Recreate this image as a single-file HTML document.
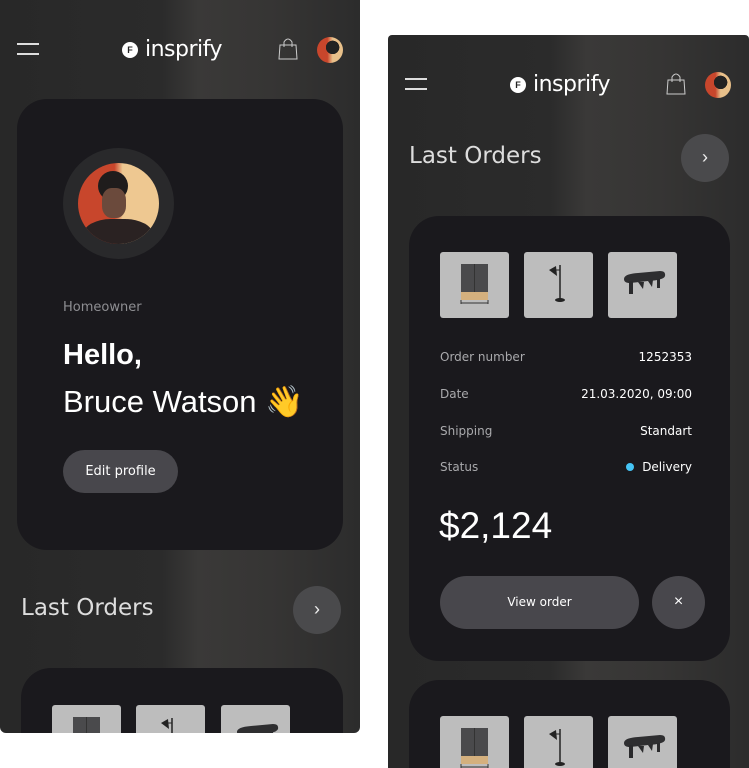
<!DOCTYPE html>
<html><head><meta charset="utf-8"><style>
*{margin:0;padding:0;box-sizing:border-box}
body{width:749px;height:768px;background:#fff;position:relative;overflow:hidden;font-family:"Liberation Sans",sans-serif;color:#fff}
.a{position:absolute}
.frame{position:absolute;overflow:hidden;background:linear-gradient(90deg,#282828 0%,#2b2b2b 45%,#3a3938 55%,#363534 75%,#2c2c2c 100%)}
.card{position:absolute;background:#1a191d;border-radius:30px}
.thumb{position:absolute;width:69px;height:66px;background:#bdbdbd;border-radius:3px}
.lbl{position:absolute;font-size:12px;color:#a9a9ac;font-family:"DejaVu Sans",sans-serif}
.val{position:absolute;font-size:12px;color:#fff;text-align:right;font-family:"DejaVu Sans",sans-serif}
.ham{position:absolute;width:22px;height:1.5px;background:#ddd}
</style></head><body>

<svg width="0" height="0" style="position:absolute"><defs>
<g id="cab"><rect x="21" y="12" width="27" height="28" fill="#4a4a4c"/><line x1="34.5" y1="12" x2="34.5" y2="40" stroke="#333"/><rect x="21" y="40" width="27" height="8" fill="#d4b07e"/><line x1="21" y1="48" x2="21" y2="52" stroke="#333"/><line x1="48" y1="48" x2="48" y2="52" stroke="#333"/><line x1="21" y1="51" x2="48" y2="51" stroke="#333"/></g>
<g id="lamp"><path d="M25 18 L32 14 L33 24 Z" fill="#222"/><line x1="36" y1="13" x2="36" y2="47" stroke="#222" stroke-width="1.5"/><line x1="31" y1="18" x2="36" y2="18" stroke="#222"/><ellipse cx="36" cy="48" rx="5" ry="2" fill="#222"/></g>
<g id="bench"><path d="M16 27 Q16 22 30 21 L52 19 Q58 19 57 24 Q56 28 40 29 L22 31 Q16 31 16 27Z" fill="#2e2e30"/><rect x="21" y="29" width="4" height="13" fill="#2a2a2c"/><rect x="49" y="27" width="3" height="9" fill="#2a2a2c"/><path d="M30 30 L35 37 L36 30Z M40 29 L44 35 L45 28Z" fill="#2a2a2c"/></g>
</defs></svg>

<!-- LEFT FRAME -->
<div class="frame" style="left:0;top:0;width:360px;height:733px;border-radius:0 0 6px 6px">
  <div class="ham" style="left:17px;top:43px"></div><div class="ham" style="left:17px;top:53px"></div>
  <div class="a" style="left:122px;top:42px;width:16px;height:16px;border-radius:50%;background:#fff;color:#222;font-size:9px;font-weight:bold;text-align:center;line-height:16px">F</div>
  <div class="a" style="left:145px;top:37px;font-size:22px;font-family:'DejaVu Sans',sans-serif;letter-spacing:-0.5px">insprify</div>
  <svg class="a" style="left:278px;top:37px" width="20" height="23" viewBox="0 0 20 23"><path d="M2 8 H18 L19 22 H1 Z" fill="none" stroke="#ccc" stroke-width="1"/><path d="M6 10 V5 Q10 -1 14 5 V10" fill="none" stroke="#ccc"/></svg>
  <div class="a" style="left:317px;top:37px;width:26px;height:26px;border-radius:50%;background:radial-gradient(circle at 60% 40%,#222 30%,transparent 31%),linear-gradient(90deg,#c8462c 40%,#e8c08a 60%)"></div>
  <div class="card" style="left:17px;top:99px;width:326px;height:451px">
    <div class="a" style="left:46px;top:49px;width:111px;height:111px;border-radius:50%;background:#29292b"></div>
    <div class="a" style="left:61px;top:64px;width:81px;height:81px;border-radius:50%;overflow:hidden;background:linear-gradient(90deg,#c8462c 0 45%,#eec891 55%)">
      <div class="a" style="left:20px;top:8px;width:30px;height:30px;border-radius:50%;background:#1f1c1c"></div>
      <div class="a" style="left:24px;top:25px;width:24px;height:30px;border-radius:40%;background:#6b4a3c"></div>
      <div class="a" style="left:5px;top:56px;width:70px;height:40px;border-radius:40% 40% 0 0;background:#2a2222"></div>
    </div>
    <div class="a" style="left:46px;top:201px;font-size:13px;color:#8e8e92;font-family:'DejaVu Sans',sans-serif">Homeowner</div>
    <div class="a" style="left:46px;top:240px;font-size:29px;font-weight:bold">Hello,</div>
    <div class="a" style="left:46px;top:284px;font-size:31px">Bruce Watson 👋</div>
    <div class="a" style="left:46px;top:351px;width:115px;height:43px;border-radius:22px;background:#48474c;font-size:13px;text-align:center;line-height:43px;font-family:'DejaVu Sans',sans-serif">Edit profile</div>
  </div>
  <div class="a" style="left:21px;top:595px;font-size:23px;color:#ddd;font-family:'DejaVu Sans',sans-serif">Last Orders</div>
  <div class="a" style="left:293px;top:586px;width:48px;height:48px;border-radius:50%;background:#4a4a4c;text-align:center;line-height:46px;font-size:18px;color:#eee">›</div>
  <div class="card" style="left:21px;top:668px;width:322px;height:100px">
    <div class="thumb" style="left:31px;top:37px"><svg width="69" height="66"><use href="#cab"/></svg></div>
    <div class="thumb" style="left:115px;top:37px"><svg width="69" height="66"><use href="#lamp"/></svg></div>
    <div class="thumb" style="left:200px;top:37px"><svg width="69" height="66"><use href="#bench"/></svg></div>
  </div>
</div>

<!-- RIGHT FRAME -->
<div class="frame" style="left:388px;top:35px;width:361px;height:733px;border-radius:4px 4px 0 0">
  <div class="ham" style="left:17px;top:43px"></div><div class="ham" style="left:17px;top:53px"></div>
  <div class="a" style="left:122px;top:42px;width:16px;height:16px;border-radius:50%;background:#fff;color:#222;font-size:9px;font-weight:bold;text-align:center;line-height:16px">F</div>
  <div class="a" style="left:145px;top:37px;font-size:22px;font-family:'DejaVu Sans',sans-serif;letter-spacing:-0.5px">insprify</div>
  <svg class="a" style="left:278px;top:37px" width="20" height="23" viewBox="0 0 20 23"><path d="M2 8 H18 L19 22 H1 Z" fill="none" stroke="#ccc" stroke-width="1"/><path d="M6 10 V5 Q10 -1 14 5 V10" fill="none" stroke="#ccc"/></svg>
  <div class="a" style="left:317px;top:37px;width:26px;height:26px;border-radius:50%;background:radial-gradient(circle at 60% 40%,#222 30%,transparent 31%),linear-gradient(90deg,#c8462c 40%,#e8c08a 60%)"></div>
  <div class="a" style="left:21px;top:108px;font-size:23px;color:#ddd;font-family:'DejaVu Sans',sans-serif">Last Orders</div>
  <div class="a" style="left:293px;top:99px;width:48px;height:48px;border-radius:50%;background:#4a4a4c;text-align:center;line-height:46px;font-size:18px;color:#eee">›</div>
  <div class="card" style="left:21px;top:181px;width:321px;height:445px">
    <div class="thumb" style="left:31px;top:36px"><svg width="69" height="66"><use href="#cab"/></svg></div>
    <div class="thumb" style="left:115px;top:36px"><svg width="69" height="66"><use href="#lamp"/></svg></div>
    <div class="thumb" style="left:199px;top:36px"><svg width="69" height="66"><use href="#bench"/></svg></div>
    <div class="lbl" style="left:31px;top:134px">Order number</div><div class="val" style="right:38px;top:134px">1252353</div>
    <div class="lbl" style="left:31px;top:171px">Date</div><div class="val" style="right:38px;top:171px">21.03.2020, 09:00</div>
    <div class="lbl" style="left:31px;top:208px">Shipping</div><div class="val" style="right:38px;top:208px">Standart</div>
    <div class="lbl" style="left:31px;top:244px">Status</div><div class="val" style="right:38px;top:244px"><span style="display:inline-block;width:8px;height:8px;border-radius:50%;background:#45c4f5;margin-right:8px"></span>Delivery</div>
    <div class="a" style="left:30px;top:289px;font-size:37px;font-weight:300">$2,124</div>
    <div class="a" style="left:31px;top:360px;width:199px;height:53px;border-radius:27px;background:#48474c;text-align:center;line-height:53px;font-size:12px;font-family:'DejaVu Sans',sans-serif">View order</div>
    <div class="a" style="left:243px;top:360px;width:53px;height:53px;border-radius:50%;background:#48474c;text-align:center;line-height:52px;font-size:16px">×</div>
  </div>
  <div class="card" style="left:21px;top:645px;width:321px;height:88px;border-radius:30px 30px 0 0">
    <div class="thumb" style="left:31px;top:36px"><svg width="69" height="66"><use href="#cab"/></svg></div>
    <div class="thumb" style="left:115px;top:36px"><svg width="69" height="66"><use href="#lamp"/></svg></div>
    <div class="thumb" style="left:199px;top:36px"><svg width="69" height="66"><use href="#bench"/></svg></div>
  </div>
</div>
</body></html>
